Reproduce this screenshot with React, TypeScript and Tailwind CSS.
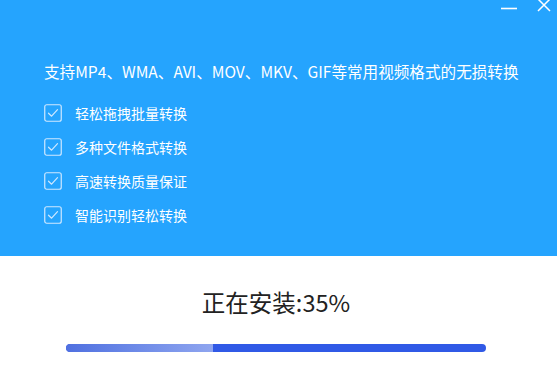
import React from 'react';

const features = ['轻松拖拽批量转换', '多种文件格式转换', '高速转换质量保证', '智能识别轻松转换'];

const CheckBox: React.FC = () => (
  <svg width="18" height="18" viewBox="0 0 18 18" fill="none" className="shrink-0">
    <rect x="0.75" y="0.75" width="16.5" height="16.5" rx="2" stroke="#cfe8ff" strokeWidth="1.2" />
    <path d="M4.5 9.2 L7.6 12.2 L13.5 5.6" stroke="#cfe8ff" strokeWidth="1.2" strokeLinecap="round" strokeLinejoin="round" />
  </svg>
);

const App: React.FC = () => {
  const progress = 35;
  return (
    <div
      className="flex h-[391px] w-[557px] flex-col overflow-hidden bg-white"
      style={{ fontFamily: '"Microsoft YaHei", "Noto Sans CJK SC", "Liberation Sans", sans-serif' }}
    >
      <div className="relative h-[256px] shrink-0 bg-[#25a4fe] pl-[44px] pt-[59px] text-white">
        <div className="absolute right-[6px] top-0 flex items-center gap-[20px]">
          <svg width="16" height="16" viewBox="0 0 16 16">
            <path d="M0 8.5 H16" stroke="white" strokeWidth="1.6" />
          </svg>
          <svg width="14" height="14" viewBox="0 0 14 14" className="mt-[-6px]">
            <path d="M1 1 L13 13 M13 1 L1 13" stroke="white" strokeWidth="1.5" />
          </svg>
        </div>
        <p className="text-[15.6px] leading-[24px]">支持MP4、WMA、AVI、MOV、MKV、GIF等常用视频格式的无损转换</p>
        <ul className="mt-[20px] flex flex-col gap-[14px]">
          {features.map((f) => (
            <li key={f} className="flex h-[20px] items-center gap-[13px] text-[14px]">
              <CheckBox />
              <span>{f}</span>
            </li>
          ))}
        </ul>
      </div>
      <div className="flex flex-1 flex-col items-center pr-[5px] pt-[30px]">
        <p className="text-[23.5px] leading-[32px] text-[#222]">正在安装:{progress}%</p>
        <div className="mt-[26px] h-[8px] w-[420px] overflow-hidden rounded-full bg-[#3059e6]">
          <div
            className="h-full rounded-l-full bg-gradient-to-r from-[#5070e0] to-[#8fa5ef]"
            style={{ width: `${progress}%` }}
          />
        </div>
      </div>
    </div>
  );
};

export default App;
